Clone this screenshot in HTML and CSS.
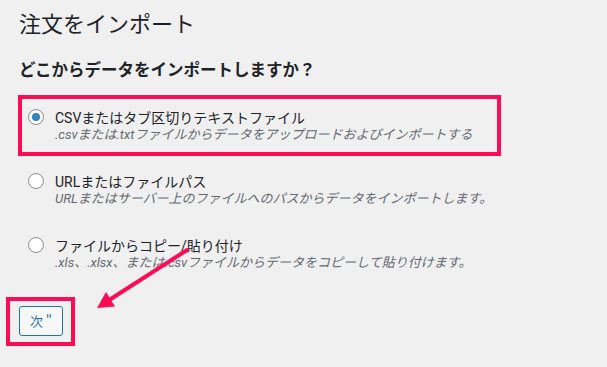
FILE: index.html
```html
<!DOCTYPE html>
<html lang="ja">
<head>
<meta charset="utf-8">
<title>注文をインポート</title>
<link rel="stylesheet" href="styles.css">
</head>
<body>
<div class="page">
  <h1 class="title">注文をインポート</h1>
  <h2 class="subtitle">どこからデータをインポートしますか？</h2>
  <div class="options">
    <label class="option highlight">
      <span class="radio checked"></span>
      <span class="text">
        <span class="opt-title">CSVまたはタブ区切りテキストファイル</span>
        <span class="opt-desc">.csvまたは.txtファイルからデータをアップロードおよびインポートする</span>
      </span>
    </label>
    <label class="option">
      <span class="radio"></span>
      <span class="text">
        <span class="opt-title">URLまたはファイルパス</span>
        <span class="opt-desc">URLまたはサーバー上のファイルへのパスからデータをインポートします。</span>
      </span>
    </label>
    <label class="option">
      <span class="radio"></span>
      <span class="text">
        <span class="opt-title">ファイルからコピー/貼り付け</span>
        <span class="opt-desc">.xls、.xlsx、または.csvファイルからデータをコピーして貼り付けます。</span>
      </span>
    </label>
  </div>
  <div class="actions">
    <button class="btn" type="button">次 "</button>
  </div>
  <svg class="arrow" width="607" height="367" viewBox="0 0 607 367" aria-hidden="true">
    <line x1="187" y1="250" x2="110" y2="299.5" stroke="#ff0a54" stroke-width="4" stroke-linecap="round"/>
    <polygon points="97,308 115,306.5 106,292" fill="#ff0a54"/>
  </svg>
</div>
</body>
</html>
```
FILE: styles.css
```css
html, body {
  margin: 0;
  padding: 0;
  background: #f0f0f1;
}
body {
  font-family: "Noto Sans CJK JP", "Noto Sans", sans-serif;
  color: #1d2327;
}
.page {
  position: relative;
  width: 607px;
  height: 367px;
  overflow: hidden;
  padding: 7px 0 0 19px;
  box-sizing: border-box;
}
.title {
  margin: 0;
  font-size: 22px;
  font-weight: 400;
  line-height: 30px;
  color: #1d2327;
}
.subtitle {
  margin: 20px 0 0;
  font-size: 16.5px;
  font-weight: 700;
  line-height: 24px;
  color: #1d2327;
}
.options {
  margin-top: 28px;
  display: flex;
  flex-direction: column;
  gap: 30px;
}
.option {
  position: relative;
  display: flex;
  align-items: flex-start;
}
.option.highlight::after {
  content: "";
  position: absolute;
  left: -1px;
  top: -14px;
  width: 483px;
  height: 61px;
  box-sizing: border-box;
  border: 4px solid #ff0a54;
  pointer-events: none;
}
.radio {
  flex: none;
  width: 16px;
  height: 16px;
  margin: 0 11px 0 9px;
  box-sizing: border-box;
  border: 1px solid #8c8f94;
  border-radius: 50%;
  background: #fff;
  display: flex;
  align-items: center;
  justify-content: center;
}
.radio.checked::before {
  content: "";
  width: 8px;
  height: 8px;
  border-radius: 50%;
  background: #3582c4;
}
.text {
  display: flex;
  flex-direction: column;
  font-family: Roboto, "Noto Sans CJK JP", sans-serif;
}
.opt-title {
  font-size: 14px;
  line-height: 18px;
  color: #1d2327;
}
.opt-desc {
  font-size: 13px;
  line-height: 16px;
  font-style: italic;
  color: #646970;
}
.actions {
  margin-top: 35px;
}
.btn {
  position: relative;
  height: 30px;
  width: 44px;
  padding: 0;
  box-sizing: border-box;
  border: 1px solid #2271b1;
  border-radius: 3px;
  background: #f6f7f7;
  color: #2271b1;
  font-family: "Noto Sans CJK JP", "Noto Sans", sans-serif;
  font-size: 13px;
  line-height: 28px;
}
.btn::after {
  content: "";
  position: absolute;
  left: -14px;
  top: -10px;
  width: 69px;
  height: 49px;
  box-sizing: border-box;
  border: 4px solid #ff0a54;
}
.arrow {
  position: absolute;
  left: 0;
  top: 0;
  pointer-events: none;
}
```
